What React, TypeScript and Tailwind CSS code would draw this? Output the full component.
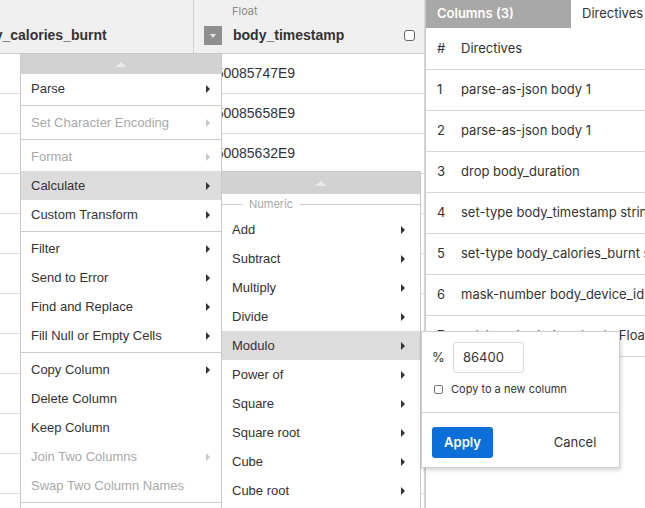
import React from "react";

type MenuEntry =
  | { kind: "item"; label: string; arrow?: boolean; disabled?: boolean; active?: boolean }
  | { kind: "sep" };

const mainMenu: MenuEntry[] = [
  { kind: "item", label: "Parse", arrow: true },
  { kind: "sep" },
  { kind: "item", label: "Set Character Encoding", arrow: true, disabled: true },
  { kind: "sep" },
  { kind: "item", label: "Format", arrow: true, disabled: true },
  { kind: "item", label: "Calculate", arrow: true, active: true },
  { kind: "item", label: "Custom Transform", arrow: true },
  { kind: "sep" },
  { kind: "item", label: "Filter", arrow: true },
  { kind: "item", label: "Send to Error", arrow: true },
  { kind: "item", label: "Find and Replace", arrow: true },
  { kind: "item", label: "Fill Null or Empty Cells", arrow: true },
  { kind: "sep" },
  { kind: "item", label: "Copy Column", arrow: true },
  { kind: "item", label: "Delete Column" },
  { kind: "item", label: "Keep Column" },
  { kind: "item", label: "Join Two Columns", arrow: true, disabled: true },
  { kind: "item", label: "Swap Two Column Names", disabled: true },
  { kind: "sep" },
  { kind: "item", label: "Define Variable" },
];

const subMenu: MenuEntry[] = [
  { kind: "item", label: "Add", arrow: true },
  { kind: "item", label: "Subtract", arrow: true },
  { kind: "item", label: "Multiply", arrow: true },
  { kind: "item", label: "Divide", arrow: true },
  { kind: "item", label: "Modulo", arrow: true, active: true },
  { kind: "item", label: "Power of", arrow: true },
  { kind: "item", label: "Square", arrow: true },
  { kind: "item", label: "Square root", arrow: true },
  { kind: "item", label: "Cube", arrow: true },
  { kind: "item", label: "Cube root", arrow: true },
  { kind: "item", label: "Log", arrow: true },
];

const values = [
  "1.50085747E9",
  "1.50085658E9",
  "1.50085632E9",
  "1.50085611E9",
  "1.50085598E9",
  "1.50085574E9",
  "1.50085549E9",
  "1.50085521E9",
  "1.50085503E9",
  "1.50085488E9",
  "1.50085462E9",
  "1.50085437E9",
];

const directives = [
  "parse-as-json body 1",
  "parse-as-json body 1",
  "drop body_duration",
  "set-type body_timestamp string",
  "set-type body_calories_burnt string",
  "mask-number body_device_id ####",
  "set-type body_heart_rate Float",
];

function Arrow({ disabled }: { disabled?: boolean }) {
  return (
    <span
      className={
        "w-0 h-0 border-y-[4px] border-y-transparent border-l-[4px] " +
        (disabled ? "border-l-[#c8c8c8]" : "border-l-[#333333]")
      }
    />
  );
}

function ScrollUp({ h }: { h: string }) {
  return (
    <div className={"flex items-center justify-center bg-[#d2d2d2] " + h}>
      <span className="w-0 h-0 border-x-[6px] border-x-transparent border-b-[5px] border-b-[#e9e9e9]" />
    </div>
  );
}

function Entries({ entries, pr }: { entries: MenuEntry[]; pr: string }) {
  return (
    <>
      {entries.map((e, i) =>
        e.kind === "sep" ? (
          <div key={i} className="py-[2px]">
            <div className="h-px bg-[#cccccc]" />
          </div>
        ) : (
          <div
            key={i}
            className={
              "h-[29px] flex items-center justify-between pl-[10px] " +
              pr +
              " " +
              (e.active ? "bg-[#dcdcdc] " : "") +
              (e.disabled ? "text-[#a9a9a9]" : "text-[#333333]")
            }
          >
            <span className="whitespace-nowrap">{e.label}</span>
            {e.arrow ? <Arrow disabled={e.disabled} /> : null}
          </div>
        )
      )}
    </>
  );
}

export default function App() {
  return (
    <div
      className="relative w-[645px] h-[508px] overflow-hidden bg-white flex text-[#333333]"
      style={{ fontFamily: '"Liberation Sans", Arial, sans-serif' }}
    >
      {/* Data table */}
      <div className="w-[425px] shrink-0 flex flex-col border-r border-[#d8d8d8]">
        <div className="h-[54px] shrink-0 flex bg-[#f0f0f0] border-b border-[#cccccc]">
          <div className="w-[194px] shrink-0 border-r border-[#d0d0d0] overflow-hidden flex flex-col pt-[4px]">
            <div className="h-[14px]" />
            <div className="mt-[8px] h-[19px] flex items-center">
              <span className="ml-[-31px] font-bold text-[14px] whitespace-nowrap">body_calories_burnt</span>
            </div>
          </div>
          <div className="flex-1 flex flex-col pt-[4px] pl-[10px] pr-[9px]">
            <div
              className="pl-[28px] text-[11px] leading-[14px] text-[#8a8a8a]"
              style={{ fontFamily: "Inter, sans-serif" }}
            >
              Float
            </div>
            <div className="mt-[8px] h-[19px] flex items-center">
              <div className="w-[18px] h-[19px] bg-[#8f8f8f] flex items-center justify-center">
                <span className="w-0 h-0 border-x-[3px] border-x-transparent border-t-[4px] border-t-[#e4e4e4]" />
              </div>
              <span className="ml-[11px] font-bold text-[14px] whitespace-nowrap">body_timestamp</span>
              <span className="ml-auto w-[11px] h-[11px] border border-[#666666] rounded-[3px] bg-white" />
            </div>
          </div>
        </div>
        {values.map((v, i) => (
          <div key={i} className="h-[40px] shrink-0 flex border-b border-[#dddddd]">
            <div className="w-[194px] shrink-0 border-r border-[#e2e2e2]" />
            <div className="flex-1 flex items-center pl-[10px] text-[14px] whitespace-nowrap">{v}</div>
          </div>
        ))}
      </div>

      {/* Right panel */}
      <div
        className="flex-1 flex flex-col border-l border-[#c8c8c8] text-[13px]"
        style={{ fontFamily: "Inter, sans-serif" }}
      >
        <div className="h-[28px] shrink-0 flex">
          <div className="w-[145px] shrink-0 bg-[#a8a8a8] text-white font-semibold pl-[11px] flex items-center whitespace-nowrap">
            Columns (3)
          </div>
          <div className="flex-1 pl-[11px] flex items-center whitespace-nowrap overflow-hidden">Directives</div>
        </div>
        <div className="h-[42px] shrink-0 flex items-center pl-[11px] border-b border-[#d6d6d6]">
          <span className="w-[24px] shrink-0">#</span>
          <span>Directives</span>
        </div>
        {directives.map((d, i) => (
          <div
            key={i}
            className="h-[41px] shrink-0 flex items-center pl-[11px] border-b border-[#d6d6d6] overflow-hidden whitespace-nowrap"
          >
            <span className="w-[24px] shrink-0">{i + 1}</span>
            <span>{d}</span>
          </div>
        ))}
      </div>

      {/* Main context menu */}
      <div className="absolute left-[20px] top-[53px] w-[202px] bg-white border border-[#c8c8c8] text-[13px]">
        <ScrollUp h="h-[20px]" />
        <Entries entries={mainMenu} pr="pr-[11px]" />
      </div>

      {/* Calculate submenu */}
      <div className="absolute left-[221px] top-[171px] w-[200px] bg-white border border-[#c8c8c8] text-[13px]">
        <ScrollUp h="h-[22px]" />
        <div className="h-[21px] flex items-center">
          <div className="w-[20px] h-px bg-[#cccccc]" />
          <span
            className="mx-[7px] text-[11px] text-[#a8a8a8]"
            style={{ fontFamily: "Inter, sans-serif" }}
          >
            Numeric
          </span>
          <div className="flex-1 h-px bg-[#cccccc]" />
        </div>
        <Entries entries={subMenu} pr="pr-[15px]" />
      </div>

      {/* Modulo popover */}
      <div
        className="absolute left-[421px] top-[331px] w-[199px] bg-white border border-[#cfcfcf] shadow-[1px_2px_4px_rgba(0,0,0,0.18)] text-[13px] text-[#333333]"
        style={{ fontFamily: "Inter, sans-serif" }}
      >
        <div className="px-[10px] pt-[10px]">
          <div className="flex items-center">
            <span className="w-[21px] shrink-0">%</span>
            <div className="w-[71px] h-[31px] border border-[#d9d9d9] rounded-[3px] pl-[9px] flex items-center">
              86400
            </div>
          </div>
          <div className="mt-[8px] h-[16px] flex items-center pl-[2px]">
            <span className="w-[9px] h-[9px] border border-[#777777] rounded-[2px]" />
            <span className="ml-[8px] text-[11px] whitespace-nowrap">Copy to a new column</span>
          </div>
        </div>
        <div className="mt-[15px] h-px bg-[#d4d4d4]" />
        <div className="px-[10px] pt-[14px] pb-[9px] flex items-center">
          <div className="w-[61px] h-[31px] rounded-[3px] bg-[#0b6fd7] text-white font-semibold flex items-center justify-center">
            Apply
          </div>
          <div className="ml-auto w-[68px] h-[31px] flex items-center justify-center">Cancel</div>
        </div>
      </div>
    </div>
  );
}
